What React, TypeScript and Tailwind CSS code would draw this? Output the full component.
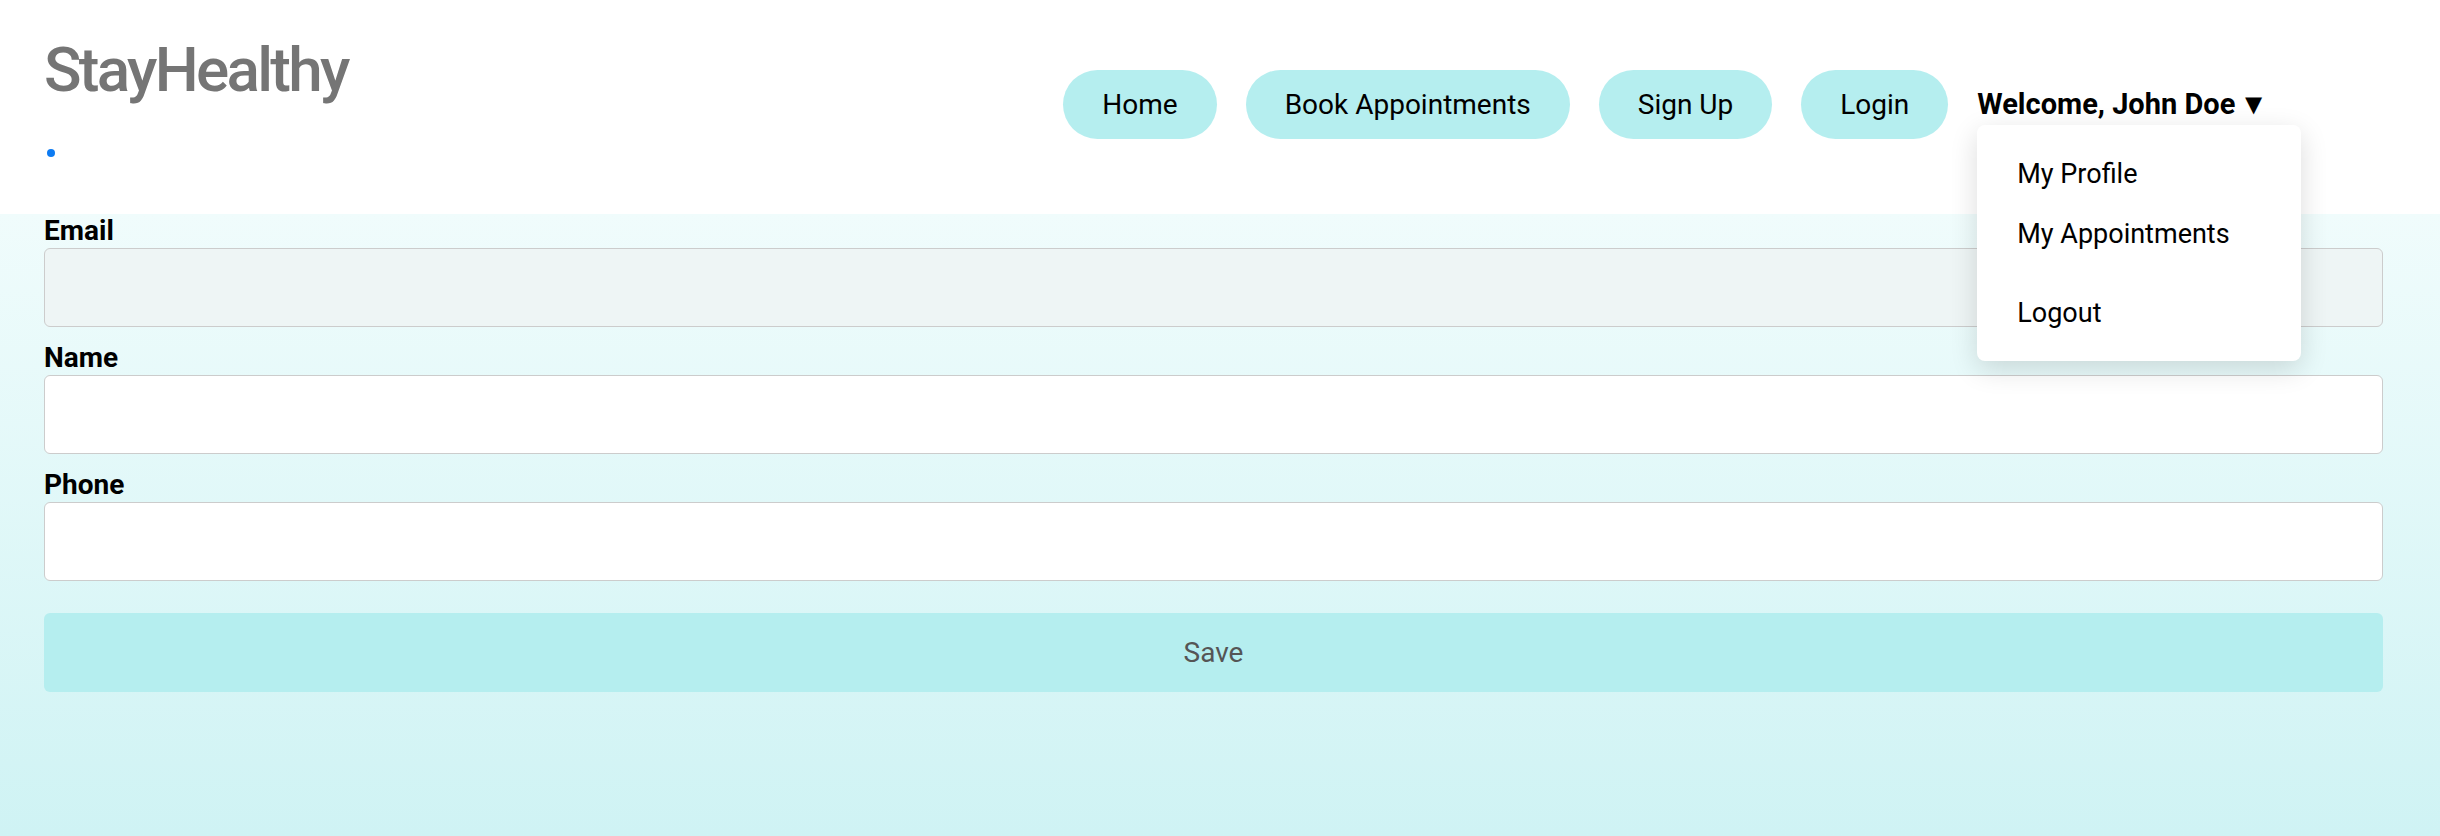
import React from "react";

const navLinks = ["Home", "Book Appointments", "Sign Up", "Login"];

export default function App() {
  return (
    <div className="h-[836px] w-[2440px] flex flex-col bg-white font-['Roboto',sans-serif] text-black overflow-hidden">
      {/* HEADER */}
      <header className="relative z-10 h-[214px] flex items-start bg-white">
        <div className="pl-[44px] pt-[33px] flex flex-col">
          <h1 className="text-[62px] leading-[73px] tracking-[-2.7px] text-[#757575] font-medium">
            StayHealthy
          </h1>
          <span className="mt-[43px] ml-[3px] w-[8px] h-[8px] rounded-full bg-[#0d7bf2]" />
        </div>

        <nav className="ml-auto mr-[172px] mt-[70px] flex items-center gap-[29px]">
          {navLinks.map((l) => (
            <a
              key={l}
              href="#"
              className="h-[69px] px-[39px] flex items-center rounded-full bg-[#b5eeef] text-[28px] text-black"
            >
              {l}
            </a>
          ))}
          <div className="relative">
            <span className="text-[29px] font-bold leading-[33px] whitespace-nowrap">
              Welcome, John Doe<span className="ml-[4px]">▼</span>
            </span>
            {/* dropdown */}
            <div className="absolute left-0 top-[calc(100%+4px)] w-[324px] bg-white rounded-[8px] shadow-[0_8px_28px_rgba(0,0,0,0.14)] pt-[19px] pb-[18px] pl-[40px] text-[27px]">
              <div className="leading-[60px]">My Profile</div>
              <div className="leading-[60px]">My Appointments</div>
              <div className="leading-[60px] mt-[19px]">Logout</div>
            </div>
          </div>
        </nav>
      </header>

      {/* PROFILE FORM */}
      <main className="flex-1 bg-gradient-to-b from-[#f0fcfc] to-[#cff3f4] pl-[44px] pr-[57px]">
        <form className="flex flex-col" onSubmit={(e) => e.preventDefault()}>
          <Field label="Email" disabled />
          <Field label="Name" className="mt-[14px]" />
          <Field label="Phone" className="mt-[14px]" />
          <button
            type="submit"
            className="mt-[32px] h-[79px] w-full rounded-[6px] bg-[#b5eeef] text-[28px] text-[#555555]"
          >
            Save
          </button>
        </form>
      </main>
    </div>
  );
}

function Field({
  label,
  disabled = false,
  className = "",
}: {
  label: string;
  disabled?: boolean;
  className?: string;
}) {
  return (
    <label className={`flex flex-col ${className}`}>
      <span className="text-[28px] font-bold leading-[34px]">{label}</span>
      <input
        disabled={disabled}
        className={`h-[79px] w-full rounded-[6px] border border-[#cccccc] outline-none ${
          disabled ? "bg-[#eef5f5]" : "bg-white"
        }`}
      />
    </label>
  );
}
